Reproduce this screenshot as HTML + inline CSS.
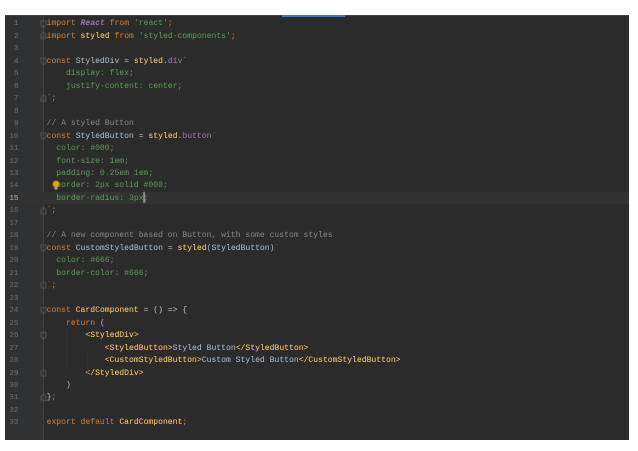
<!DOCTYPE html>
<html>
<head>
<meta charset="utf-8">
<style>
html,body{margin:0;padding:0;background:#fff;width:638px;height:449px;overflow:hidden}
#p{position:absolute;left:5px;top:15px;width:624px;height:425px;background:#2b2b2b;overflow:hidden;border-top:1px solid #444;box-sizing:border-box}
#g{position:absolute;left:0;top:0;width:38px;height:100%;background:#2f3133;border-right:1px solid #3c3e40}
#bar{position:absolute;left:282px;top:15px;width:63px;height:2px;background:#4a72ad}
#cur{position:absolute;left:5px;top:192px;width:624px;height:12px;background:#323232}
#code{position:absolute;left:0;top:1.5px;width:638px;height:449px;filter:blur(.38px);font:8.08px/12.47px "Liberation Mono",monospace;color:#a9b7c6;-webkit-text-stroke:.05px currentColor}
.l{position:absolute;left:46.6px;white-space:pre}
.n{position:absolute;left:5px;width:13.5px;text-align:right;color:#6a6d70;font-size:7.6px;white-space:pre}
.k{color:#cc7832}.f{color:#ffc66d}.s{color:#5a9556}.c{color:#808080}.p{color:#9876aa}.i{font-style:italic}.b{font-weight:bold}
svg{position:absolute;left:0;top:0}
</style>
</head>
<body>
<div id="p"><div id="g"></div></div>
<div id="bar"></div>
<div id="cur"></div>
<div id="code">
<div class="n" style="top:16.8px">1</div>
<div class="n" style="top:29.3px">2</div>
<div class="n" style="top:41.7px">3</div>
<div class="n" style="top:54.2px">4</div>
<div class="n" style="top:66.7px">5</div>
<div class="n" style="top:79.2px">6</div>
<div class="n" style="top:91.6px">7</div>
<div class="n" style="top:104.1px">8</div>
<div class="n" style="top:116.6px">9</div>
<div class="n" style="top:129px">10</div>
<div class="n" style="top:141.5px">11</div>
<div class="n" style="top:154px">12</div>
<div class="n" style="top:166.4px">13</div>
<div class="n" style="top:178.9px">14</div>
<div class="n" style="top:191.4px;color:#b4b3b3">15</div>
<div class="n" style="top:203.9px">16</div>
<div class="n" style="top:216.3px">17</div>
<div class="n" style="top:228.8px">18</div>
<div class="n" style="top:241.3px">19</div>
<div class="n" style="top:253.7px">20</div>
<div class="n" style="top:266.2px">21</div>
<div class="n" style="top:278.7px">22</div>
<div class="n" style="top:291.1px">23</div>
<div class="n" style="top:303.6px">24</div>
<div class="n" style="top:316.1px">25</div>
<div class="n" style="top:328.6px">26</div>
<div class="n" style="top:341px">27</div>
<div class="n" style="top:353.5px">28</div>
<div class="n" style="top:366px">29</div>
<div class="n" style="top:378.4px">30</div>
<div class="n" style="top:390.9px">31</div>
<div class="n" style="top:403.4px">32</div>
<div class="n" style="top:415.8px">33</div>

<div class="l" style="top:16.8px"><span class="k">import</span> <span class="p i b">React</span> <span class="k">from</span> <span class="s">'react'</span><span class="k">;</span></div>
<div class="l" style="top:29.3px"><span class="k">import</span> <span class="f">styled</span> <span class="k">from</span> <span class="s">'styled-components'</span><span class="k">;</span></div>
<div class="l" style="top:54.2px"><span class="k">const</span> StyledDiv = <span class="f">styled</span>.<span class="p">div</span><span class="s">`</span></div>
<div class="l s" style="top:66.7px">    display: flex;</div>
<div class="l s" style="top:79.2px">    justify-content: center;</div>
<div class="l" style="top:91.6px"><span class="s">`</span><span class="k">;</span></div>
<div class="l c" style="top:116.6px">// A styled Button</div>
<div class="l" style="top:129px"><span class="k">const</span> StyledButton = <span class="f">styled</span>.<span class="p">button</span><span class="s">`</span></div>
<div class="l s" style="top:141.5px">  color: #000;</div>
<div class="l s" style="top:154px">  font-size: 1em;</div>
<div class="l s" style="top:166.4px">  padding: 0.25em 1em;</div>
<div class="l s" style="top:178.9px">  border: 2px solid #000;</div>
<div class="l s" style="top:191.4px">  border-radius: 3px;</div>
<div class="l" style="top:203.9px"><span class="s">`</span><span class="k">;</span></div>
<div class="l c" style="top:228.8px">// A new component based on Button, with some custom styles</div>
<div class="l" style="top:241.3px"><span class="k">const</span> CustomStyledButton = <span class="f">styled</span>(StyledButton)<span class="s">`</span></div>
<div class="l s" style="top:253.7px">  color: #666;</div>
<div class="l s" style="top:266.2px">  border-color: #666;</div>
<div class="l" style="top:278.7px"><span class="s">`</span><span class="k">;</span></div>
<div class="l" style="top:303.6px"><span class="k">const</span> <span class="f">CardComponent</span> = () =&gt; {</div>
<div class="l" style="top:316.1px">    <span class="k">return</span> (</div>
<div class="l f" style="top:328.6px">        &lt;StyledDiv&gt;</div>
<div class="l" style="top:341px">            <span class="f">&lt;StyledButton&gt;</span>Styled Button<span class="f">&lt;/StyledButton&gt;</span></div>
<div class="l" style="top:353.5px">            <span class="f">&lt;CustomStyledButton&gt;</span>Custom Styled Button<span class="f">&lt;/CustomStyledButton&gt;</span></div>
<div class="l f" style="top:366px">        &lt;/StyledDiv&gt;</div>
<div class="l" style="top:378.4px">    )</div>
<div class="l" style="top:390.9px">}<span class="k">;</span></div>
<div class="l" style="top:415.8px"><span class="k">export default</span> <span class="f">CardComponent</span><span class="k">;</span></div>
</div>
<svg width="638" height="449" style="filter:blur(.4px)">
<g fill="none" stroke="#55585a" stroke-width="1">
<path d="M41 21h5v4l-2.500 2.500l-2.500-2.500z"/>
<path d="M41 34.500l2.500-2.500l2.500 2.500v4h-5z M42 36.500h3"/>
<path d="M41 58h5v4l-2.500 2.500l-2.500-2.500z"/>
<path d="M41 97.500l2.500-2.500l2.500 2.500v4h-5z M42 99.500h3"/>
<path d="M41 133h5v4l-2.500 2.500l-2.500-2.500z"/>
<path d="M41 210l2.500-2.500l2.500 2.500v4h-5z"/>
<path d="M41 245h5v4l-2.500 2.500l-2.500-2.500z"/>
<path d="M41 284l2.500-2.500l2.500 2.500v4h-5z"/>
<path d="M41 307.500h5v4l-2.500 2.500l-2.500-2.500z"/>
<path d="M41 332.500h5v4l-2.500 2.500l-2.500-2.500z"/>
<path d="M41 372l2.500-2.500l2.500 2.500v4h-5z"/>
<path d="M41 396.500l2.500-2.500l2.500 2.500v4h-5z"/>
</g>
<path d="M66.500 325v47M87.500 350v23" stroke="#363636" stroke-width="1"/>
<circle cx="56" cy="184" r="3.300" fill="#f0a30a"/>
<rect x="54.500" y="187" width="3" height="2.500" fill="#a9a9a9"/>
<rect x="143.500" y="192" width="1.200" height="11" fill="#d0d0d0"/>
</svg>
</body>
</html>
